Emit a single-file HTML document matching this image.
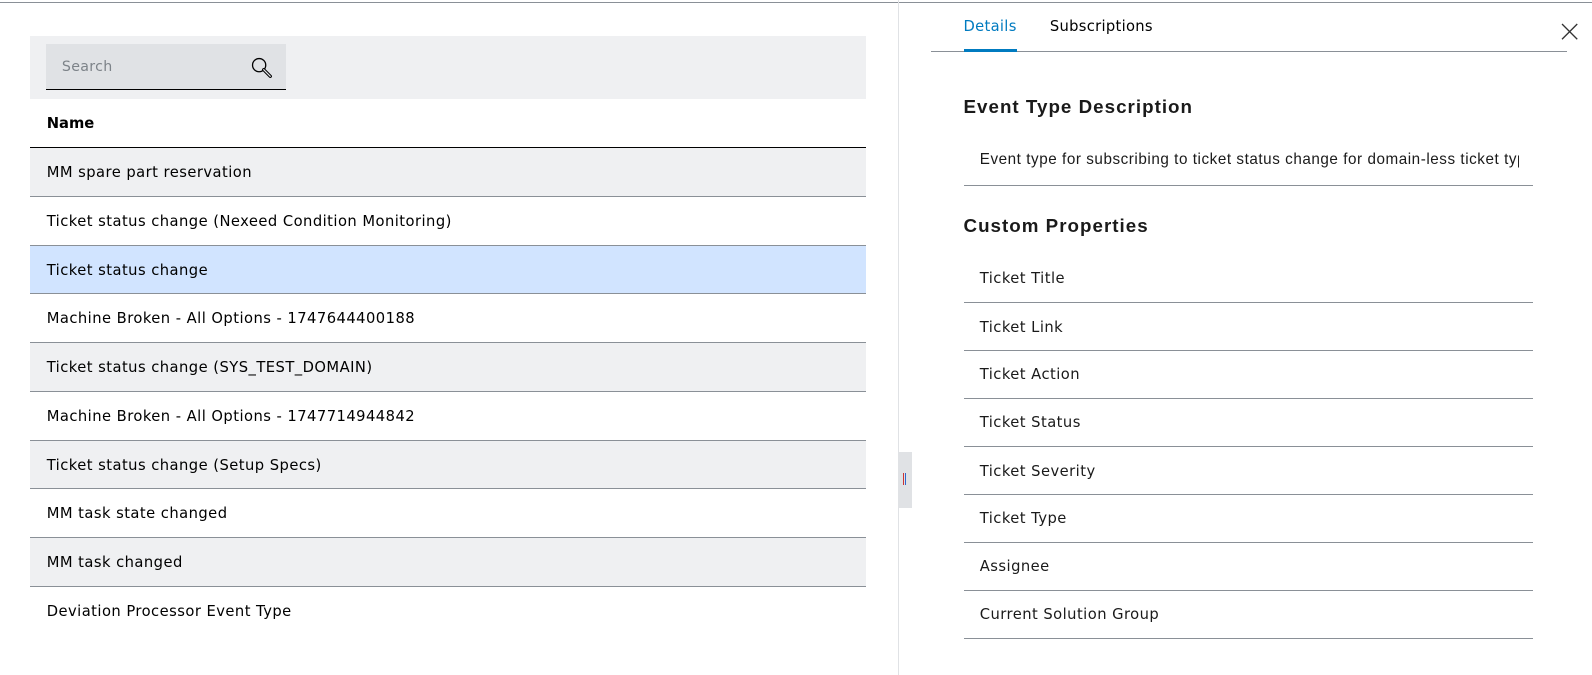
<!DOCTYPE html>
<html><head><style>
body{margin:0;width:1592px;height:665px;background:#fff;font-family:"DejaVu Sans","Liberation Sans",sans-serif;color:#000;overflow:hidden}
#w{position:relative;zoom:1.0153;width:1568px;height:655px}
.topline{position:absolute;left:0;top:2px;width:1592px;height:1px;background:#8a9097}
.filter{position:absolute;left:30px;top:35px;width:823px;height:63px;background:#eff0f2}
.search{position:absolute;left:45px;top:43px;width:237px;height:45px;background:#e0e2e5;border-bottom:1px solid #000}
.search span{position:absolute;left:16px;top:15px;font-size:14px;color:#7d8389;letter-spacing:.3px}
.hdr{position:absolute;left:46px;top:113px;font-size:14.5px;font-weight:bold}
.hline{position:absolute;left:30px;top:145px;width:823px;height:1px;background:#000}
.row{position:absolute;left:30px;width:823px;height:47px;border-bottom:1px solid #8a9097;font-size:14.5px;line-height:49px;text-indent:16px;letter-spacing:.45px}
.g{background:#eff0f2}.sel{background:#d1e4ff}
.div{position:absolute;left:884px;top:0;width:1px;height:665px;background:#e0e2e5}
.handle{position:absolute;left:884px;top:445px;width:14px;height:55px;background:#e0e2e5}
.tab{position:absolute;top:18px;font-size:14.5px;letter-spacing:.3px}
.tabline{position:absolute;left:917px;top:50px;width:626px;height:1px;background:#8a9097}
h2{position:absolute;left:949px;margin:0;font-family:"Liberation Sans",sans-serif;font-size:18.5px;font-weight:bold;color:#1a1a1a;letter-spacing:1px}
.desc{position:absolute;left:949px;top:149px;width:561px;height:33px;border-bottom:1px solid #8a9097;font-size:14.5px;color:#1a1a1a}
.desc div{position:absolute;left:16px;top:0;width:531px;white-space:nowrap;overflow:hidden;font-family:"Liberation Sans",sans-serif;font-size:15px;letter-spacing:.55px}
.p{position:absolute;left:949px;width:561px;height:46px;border-bottom:1px solid #8a9097;font-size:14.5px;line-height:48px;text-indent:16px;color:#1a1a1a;letter-spacing:.45px}
</style></head><body><div id="w">
<div class="topline"></div>
<div class="filter"></div>
<div class="search"><span>Search</span>
<svg style="position:absolute;left:201px;top:12px" width="24" height="24" viewBox="0 0 24 24"><circle cx="9" cy="9" r="6.5" fill="none" stroke="#000" stroke-width="1.3"/><path d="M13.5 13.5 L20 20" stroke="#000" stroke-width="3.2" stroke-linecap="round"/><path d="M13.5 13.5 L20 20" stroke="#e0e2e5" stroke-width="1.2" stroke-linecap="round"/></svg></div>
<div class="hdr">Name</div>
<div class="hline"></div>
<div class="row g" style="top:146px">MM spare part reservation</div>
<div class="row" style="top:194px">Ticket status change (Nexeed Condition Monitoring)</div>
<div class="row sel" style="top:242px">Ticket status change</div>
<div class="row" style="top:290px">Machine Broken - All Options - 1747644400188</div>
<div class="row g" style="top:338px">Ticket status change (SYS_TEST_DOMAIN)</div>
<div class="row" style="top:386px">Machine Broken - All Options - 1747714944842</div>
<div class="row g" style="top:434px">Ticket status change (Setup Specs)</div>
<div class="row" style="top:482px">MM task state changed</div>
<div class="row g" style="top:530px">MM task changed</div>
<div class="row" style="top:578px;border:none">Deviation Processor Event Type</div>
<div class="div"></div>
<div class="handle"><div style="position:absolute;left:5px;top:21px;width:1px;height:12px;background:#c33"></div><div style="position:absolute;left:7px;top:21px;width:1px;height:12px;background:#36c"></div></div>
<div class="tab" style="left:949px;color:#007bc0">Details</div>
<div class="tab" style="left:1034px">Subscriptions</div>
<div class="tabline"></div>
<div style="position:absolute;left:949px;top:48px;width:53px;height:3px;background:#007bc0"></div>
<svg style="position:absolute;left:1537px;top:23px" width="18" height="18"><path d="M1 1L16 16M16 1L1 16" stroke="#333" stroke-width="1.3"/></svg>
<h2 style="top:95px">Event Type Description</h2>
<div class="desc"><div>Event type for subscribing to ticket status change for domain-less ticket types</div></div>
<h2 style="top:212px">Custom Properties</h2>
<div class="p" style="top:251px">Ticket Title</div>
<div class="p" style="top:299px">Ticket Link</div>
<div class="p" style="top:346px">Ticket Action</div>
<div class="p" style="top:393px">Ticket Status</div>
<div class="p" style="top:441px">Ticket Severity</div>
<div class="p" style="top:488px">Ticket Type</div>
<div class="p" style="top:535px">Assignee</div>
<div class="p" style="top:582px">Current Solution Group</div>
</div></body></html>
